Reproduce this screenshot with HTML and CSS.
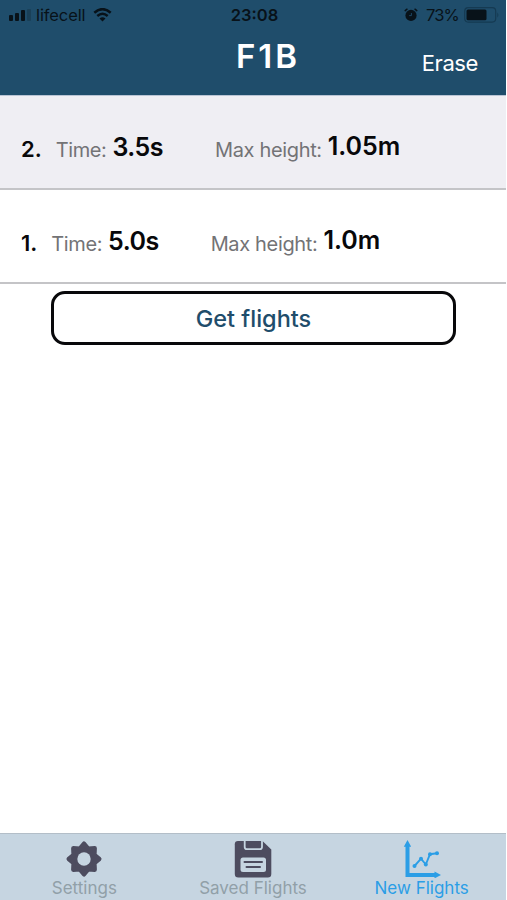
FILE: index.html
```html
<!DOCTYPE html>
<html lang="en">
<head>
    <meta charset="UTF-8">
    <meta name="viewport" content="width=device-width, initial-scale=1.0">
    <title>F1B</title>
    <link rel="stylesheet" href="styles.css">
</head>
<body>
    <div class="app">
        <header class="header">
            <div class="status-bar">
                <div class="status-left">
                    <svg class="signal" width="23" height="12" viewBox="0 0 23 12">
                        <rect x="0" y="6" width="4" height="6" rx="1"/>
                        <rect x="6" y="4" width="4" height="8" rx="1"/>
                        <rect x="12" y="1" width="4" height="11" rx="1"/>
                        <rect x="18" y="0" width="4" height="12" rx="1" opacity="0.22"/>
                    </svg>
                    <span class="carrier">lifecell</span>
                    <svg class="wifi" width="19" height="14" viewBox="0 0 19 14">
                        <path d="M1.3 4.7 Q9.5 -2.4 17.7 4.7 M4.3 8 Q9.5 3.6 14.7 8" fill="none" stroke="#081219" stroke-width="2.5"/>
                        <path d="M6.5 10.4 Q9.5 8 12.5 10.4 L9.5 13.5 Z"/>
                    </svg>
                </div>
                <span class="clock">23:08</span>
                <div class="status-right">
                    <svg class="alarm" width="14" height="14" viewBox="0 0 14 14">
                        <circle cx="7" cy="7.4" r="5.6"/>
                        <path d="M1.2 2.6 L3 1.2 M12.8 2.6 L11 1.2" stroke="#081219" stroke-width="1.5" stroke-linecap="round"/>
                        <path d="M7.4 5 V7.6 H5.2" fill="none" stroke="#1f4d6b" stroke-width="0.9"/>
                    </svg>
                    <span class="percent">73%</span>
                    <svg class="battery" width="36" height="16" viewBox="0 0 36 16">
                        <rect x="0.7" y="0.7" width="31" height="14.4" rx="3.5" fill="none" stroke="#153a52" stroke-width="1.2"/>
                        <rect x="2.5" y="2.5" width="20" height="10.8" rx="1.5"/>
                        <path d="M33.3 5.5 Q35.5 8 33.3 10.5 Z" fill="#153a52"/>
                    </svg>
                </div>
            </div>
            <div class="nav-bar">
                <h1>F1B</h1>
                <button class="erase">Erase</button>
            </div>
        </header>

        <main>
            <div class="flight selected">
                <span class="number">2.</span>
                <span class="label">Time:</span>
                <span class="value time">3.5s</span>
                <span class="label max">Max height:</span>
                <span class="value height">1.05m</span>
            </div>
            <div class="flight">
                <span class="number">1.</span>
                <span class="label">Time:</span>
                <span class="value time">5.0s</span>
                <span class="label max">Max height:</span>
                <span class="value height">1.0m</span>
            </div>
            <button class="get-flights">Get flights</button>
        </main>

        <nav class="tab-bar">
            <a class="tab">
                <svg width="38" height="38" viewBox="0 0 38 38">
                    <path fill="#4d4c5f" stroke="#4d4c5f" stroke-width="4.4" stroke-linejoin="round" d="M19 3.7 L23.2 8.6 L29.7 8.3 L29.4 14.8 L34.3 19 L29.4 23.2 L29.7 29.7 L23.2 29.4 L19 34.3 L14.8 29.4 L8.3 29.7 L8.6 23.2 L3.7 19 L8.6 14.8 L8.3 8.3 L14.8 8.6 Z"/>
                    <circle cx="19" cy="19" r="6.7" fill="#c6d5e1"/>
                </svg>
                <span>Settings</span>
            </a>
            <a class="tab">
                <svg width="38" height="38" viewBox="0 0 38 38">
                    <path fill="#4d4c5f" d="M4 1 H28.5 L37.3 9.6 V34 Q37.3 37.5 33.8 37.5 H4.3 Q.8 37.5 .8 34 V4.3 Q.8 1 4 1 Z"/>
                    <path fill="#4d4c5f" stroke="#c6d5e1" stroke-width="1.8" d="M10.7 -2 V7 Q10.7 9.2 12.9 9.2 H25.8 Q28 9.2 28 7 V-2"/>
                    <path d="M9 0.3 H30" stroke="#c6d5e1" stroke-width="1.4"/>
                    <rect x="6.5" y="17.5" width="25.5" height="14.5" rx="2.5" fill="#c6d5e1"/>
                    <path d="M10.5 22 H28 M12.5 27 H26" stroke="#4d4c5f" stroke-width="2" stroke-linecap="round"/>
                </svg>
                <span>Saved Flights</span>
            </a>
            <a class="tab active">
                <svg width="38" height="38" viewBox="0 0 38 38">
                    <path d="M4.5 6 V35 H32" fill="none" stroke="#2b9ee6" stroke-width="4"/>
                    <path d="M4.5 0 L8.2 6.8 H0.8 Z M38 35 L31.5 38.4 V31.6 Z" fill="#2b9ee6"/>
                    <path d="M11.5 26 L18 18.7 L22.8 24.5 L27 14.2 L34 13.3" fill="none" stroke="#2b9ee6" stroke-width="1.9"/>
                    <g fill="#2b9ee6">
                        <circle cx="11.5" cy="26" r="2"/>
                        <circle cx="18" cy="18.7" r="2"/>
                        <circle cx="22.8" cy="24.5" r="2"/>
                        <circle cx="27" cy="14.2" r="2"/>
                        <circle cx="34" cy="13.3" r="2"/>
                    </g>
                </svg>
                <span>New Flights</span>
            </a>
        </nav>
    </div>
</body>
</html>
```
FILE: styles.css
```css
* {
    box-sizing: border-box;
}

body {
    margin: 0;
    background: #fff;
    font-family: Inter, "Liberation Sans", sans-serif;
}

button {
    margin: 0;
    padding: 0;
    border: none;
    background: none;
    font-family: inherit;
}

.app {
    width: 506px;
    height: 900px;
    display: flex;
    flex-direction: column;
    overflow: hidden;
}

.header {
    height: 96px;
    background: #1f4d6b;
    border-bottom: 1px solid #b9c4d4;
}

.status-bar {
    height: 30px;
    display: grid;
    grid-template-columns: 1fr auto 1fr;
    align-items: center;
    padding: 0 6px 0 9px;
    font-size: 16.5px;
    line-height: 20px;
    color: #081219;
}

.status-bar svg {
    fill: #081219;
}

.status-left,
.status-right {
    display: flex;
    align-items: center;
}

.status-right {
    justify-content: flex-end;
}

.carrier {
    margin: 0 8px 0 4px;
    letter-spacing: -0.1px;
}

.clock {
    font-weight: 600;
}

.percent {
    margin: 0 5px 0 8px;
    letter-spacing: -0.8px;
}

.nav-bar {
    display: grid;
    grid-template-columns: 1fr auto 1fr;
    align-items: start;
    padding: 6px 28px 0 58px;
    color: #fff;
}

h1 {
    grid-column: 2;
    margin: 0;
    font-size: 33px;
    font-weight: 600;
    line-height: 40px;
    letter-spacing: 3px;
}

.erase {
    justify-self: end;
    margin-top: 12px;
    font-size: 22px;
    line-height: 30px;
    letter-spacing: -0.4px;
    color: #fff;
}

main {
    flex: 1;
    display: flex;
    flex-direction: column;
}

.flight {
    height: 94px;
    display: flex;
    align-items: flex-start;
    padding: 34px 21px 0;
    border-bottom: 2px solid #c4c4c7;
    line-height: 30px;
    white-space: nowrap;
}

.flight.selected {
    background: #efeef3;
}

.number {
    margin: 4px 14px 0 0;
    font-size: 22px;
    font-weight: 600;
    color: #08080a;
}

.label {
    margin: 5px 6px 0 0;
    font-size: 20px;
    letter-spacing: -0.4px;
    color: #737376;
}

.value {
    font-size: 25px;
    font-weight: 600;
    color: #08080a;
}

.time {
    margin-top: 2px;
    letter-spacing: -0.5px;
}

.height {
    margin-top: 1px;
}

.label.max {
    margin-left: 52px;
    letter-spacing: -0.35px;
}

.get-flights {
    width: 405px;
    height: 54px;
    margin: 7px 0 0 51px;
    border: 3px solid #08080a;
    border-radius: 14px;
    font-size: 23.5px;
    font-weight: 500;
    color: #1f4d6b;
}

.tab-bar {
    height: 67px;
    display: grid;
    grid-template-columns: repeat(3, 1fr);
    background: #c6d5e1;
    border-top: 1px solid #b3bec8;
}

.tab {
    display: flex;
    flex-direction: column;
    align-items: center;
    padding-top: 6px;
    font-size: 17px;
    line-height: 18px;
    color: #91a0a8;
}

.tab svg {
    flex-shrink: 0;
    margin-bottom: 1px;
}

.tab.active {
    color: #2b9ee6;
}
```
